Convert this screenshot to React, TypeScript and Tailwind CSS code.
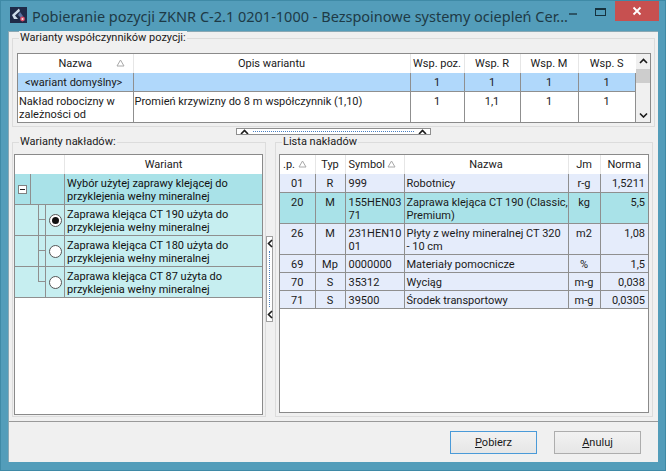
const sans = "font-['Roboto','Noto_Sans','Liberation_Sans',sans-serif]";

function Sort() {
  return (
    <svg width="9" height="8" viewBox="0 0 9 8" className="absolute right-2 top-[5px]">
      <path d="M4.5 1 L8 7 L1 7 Z" fill="#fff" stroke="#a8a8a8" strokeWidth="1" />
    </svg>
  );
}

function Chevron({ dir }: { dir: "up" | "down" | "left" }) {
  const d = dir === "up" ? "M1 5 L4.5 1.5 L8 5" : dir === "down" ? "M1 1.5 L4.5 5 L8 1.5" : "M5 1 L1.5 4.5 L5 8";
  const w = dir === "left" ? 6 : 9;
  const h = dir === "left" ? 9 : 6;
  return (
    <svg width={w} height={h} viewBox={`0 0 ${w} ${h}`} className="shrink-0">
      <path d={d} fill="none" stroke="#1a1a1a" strokeWidth="1.6" />
    </svg>
  );
}

function Radio({ on }: { on?: boolean }) {
  return (
    <span className="w-[13px] h-[13px] rounded-full border border-[#555] bg-white flex items-center justify-center">
      {on && <span className="w-[7px] h-[7px] rounded-full bg-[#111]" />}
    </span>
  );
}

const TH = "relative border-l border-[#e6e6e6] first:border-l-0 font-normal text-center p-0 pt-[1px] h-[19px] bg-white overflow-hidden whitespace-nowrap";
const TD = "border border-[#8f8f8f] px-[3px] pt-[3px] align-top leading-[13px] overflow-hidden";

function TopTable() {
  return (
    <div className="flex border border-[#8a8a8a] h-[70px] bg-white overflow-hidden">
      <table className="table-fixed border-collapse w-[617px] h-[69px] self-start">
        <colgroup>
          <col className="w-[115px]" /><col className="w-[277px]" /><col className="w-[54px]" />
          <col className="w-[56px]" /><col className="w-[58px]" /><col className="w-[57px]" />
        </colgroup>
        <thead>
          <tr>
            <th className={TH}>Nazwa<Sort /></th>
            <th className={TH}>Opis wariantu</th>
            <th className={TH}>Wsp. poz.</th>
            <th className={TH}>Wsp. R</th>
            <th className={TH}>Wsp. M</th>
            <th className={TH}>Wsp. S</th>
          </tr>
        </thead>
        <tbody>
          <tr className="bg-[#b0d8fb] h-[18px]">
            <td className={`${TD} border-l-0 border-t-0 pl-[7px] whitespace-nowrap`}>&lt;wariant domyślny&gt;</td>
            <td className={`${TD} border-t-0`}></td>
            <td className={`${TD} border-t-0 text-center`}>1</td>
            <td className={`${TD} border-t-0 text-center`}>1</td>
            <td className={`${TD} border-t-0 text-center`}>1</td>
            <td className={`${TD} border-t-0 text-center`}>1</td>
          </tr>
          <tr className="h-[32px]">
            <td className={`${TD} border-l-0 border-b-0 pl-[1px]`}>
              <div className="h-[27px] overflow-hidden">Nakład robocizny w zależności od</div>
            </td>
            <td className={`${TD} border-b-0 pl-[1px]`}>Promień krzywizny do 8 m współczynnik (1,10)</td>
            <td className={`${TD} border-b-0 text-center`}>1</td>
            <td className={`${TD} border-b-0 text-center`}>1,1</td>
            <td className={`${TD} border-b-0 text-center`}>1</td>
            <td className={`${TD} border-b-0 text-center`}>1</td>
          </tr>
        </tbody>
      </table>
      <div className="flex-1 flex flex-col items-center justify-between bg-[#f0f0f0] py-[4px]">
        <Chevron dir="up" />
        <div className="w-[15px] h-[14px] bg-[#cdcdcd] mb-auto mt-[5px]" />
        <Chevron dir="down" />
      </div>
    </div>
  );
}

function Tree({ rows }: { rows: string[] }) {
  return (
    <div className="flex-1 border border-[#8a8a8a] bg-white flex flex-col overflow-hidden">
      <div className="flex h-[19px] shrink-0">
        <div className="w-[15px]" />
        <div className="w-[35px] border-r border-[#e6e6e6]" />
        <div className="flex-1 text-center leading-[19px]">Wariant</div>
      </div>
      <div className="flex h-[31px] bg-[#a9e2e8] border-b border-[#8f8f8f]">
        <div className="w-[15px] relative flex items-center justify-center">
          <span className="w-[9px] h-[9px] border border-[#808080] bg-white flex items-center justify-center">
            <span className="w-[5px] h-px bg-[#222]" />
          </span>
        </div>
        <div className="w-[35px] border-l border-r border-[#8f8f8f]" />
        <div className="flex-1 px-[2px] pt-[3px] leading-[13px] text-[#111]">Wybór użytej zaprawy klejącej do przyklejenia wełny mineralnej</div>
      </div>
      {rows.map((r, i) => (
        <div key={r} className="flex h-[31px] bg-[#c6eef0] border-b border-[#8f8f8f]">
          <div className="w-[23px] shrink-0" />
          <div className="w-[7px] shrink-0 relative">
            <div className={`absolute left-0 top-0 w-px bg-[#8f8f8f] ${i === 2 ? "h-[15px]" : "h-[31px]"}`} />
            <div className="absolute left-0 top-[14px] w-[7px] h-px bg-[#8f8f8f]" />
          </div>
          <div className="w-[20px] shrink-0 border-l border-r border-[#8f8f8f] flex items-center justify-center">
            <Radio on={i === 0} />
          </div>
          <div className="flex-1 px-[2px] pt-[3px] leading-[13px] text-[#111]">{r}</div>
        </div>
      ))}
    </div>
  );
}

const costs = [
  ["01", "R", "999", "Robotnicy", "r-g", "1,5211", "bg-[#e5ecfb]", "h-[18px]"],
  ["20", "M", "155HEN0371", "Zaprawa klejąca CT 190 (Classic,\nPremium)", "kg", "5,5", "bg-[#a9e2e8]", "h-[31px]"],
  ["26", "M", "231HEN1001", "Płyty z wełny mineralnej CT 320\n- 10 cm", "m2", "1,08", "bg-[#e5ecfb]", "h-[31px]"],
  ["69", "Mp", "0000000", "Materiały pomocnicze", "%", "1,5", "bg-[#e5ecfb]", "h-[18px]"],
  ["70", "S", "35312", "Wyciąg", "m-g", "0,038", "bg-[#e5ecfb]", "h-[18px]"],
  ["71", "S", "39500", "Środek transportowy", "m-g", "0,0305", "bg-[#e5ecfb]", "h-[18px]"],
];

function CostTable() {
  return (
    <div className="flex-1 border border-[#8a8a8a] bg-white overflow-hidden">
      <table className="table-fixed border-collapse w-[368px]">
        <colgroup>
          <col className="w-[35px]" /><col className="w-[30px]" /><col className="w-[59px]" />
          <col className="w-[164px]" /><col className="w-[32px]" /><col className="w-[48px]" />
        </colgroup>
        <thead>
          <tr>
            <th className={`${TH} h-[18px] text-left pl-[3px]`}>.p.<Sort /></th>
            <th className={`${TH} h-[18px]`}>Typ</th>
            <th className={`${TH} h-[18px] text-left pl-[3px]`}>Symbol<Sort /></th>
            <th className={`${TH} h-[18px]`}>Nazwa</th>
            <th className={`${TH} h-[18px]`}>Jm</th>
            <th className={`${TH} h-[18px]`}>Norma</th>
          </tr>
        </thead>
        <tbody>
          {costs.map((c) => (
            <tr key={c[0]} className={`${c[6]} ${c[7]}`}>
              <td className={`${TD} border-l-0 border-t-0 text-center`}>{c[0]}</td>
              <td className={`${TD} border-t-0 text-center`}>{c[1]}</td>
              <td className={`${TD} border-t-0 px-[2px]`}>
                {c[2].length > 8 ? <>{c[2].slice(0, 8)}<wbr />{c[2].slice(8)}</> : c[2]}
              </td>
              <td className={`${TD} border-t-0 pl-[2px] pr-0 whitespace-pre`}>{c[3]}</td>
              <td className={`${TD} border-t-0 text-center`}>{c[4]}</td>
              <td className={`${TD} border-t-0 border-r-0 text-right`}>{c[5]}</td>
            </tr>
          ))}
        </tbody>
      </table>
    </div>
  );
}

function Group({ title, className, children }: { title: string; className: string; children: React.ReactNode }) {
  return (
    <section className={`relative border border-[#dcdcdc] flex flex-col ${className}`}>
      <span className="absolute -top-[8px] left-[6px] bg-[#f0f0f0] px-[1px] leading-[14px] whitespace-nowrap">{title}</span>
      {children}
    </section>
  );
}

function Button({ label, rest, primary }: { label: string; rest: string; primary?: boolean }) {
  return (
    <button className={`w-[87px] h-[23px] leading-[20px] text-center border bg-gradient-to-b from-[#f2f2f2] to-[#e6e6e6] ${primary ? "border-[#4a9ad8]" : "border-[#adadad]"}`}>
      <span className="underline underline-offset-1">{label}</span>{rest}
    </button>
  );
}

export default function App() {
  return (
    <div className={`${sans} w-[666px] h-[471px] bg-[#539dba] text-[11px] text-[#1a1a1a] flex flex-col overflow-hidden border border-[#3f8aa6]`}>
      <header className="h-[30px] shrink-0 flex items-start pl-[9px] relative">
        <svg width="17" height="16" viewBox="0 0 17 16" className="mt-[6px] shrink-0">
          <rect width="17" height="16" fill="#1f2a48" />
          <path d="M2 8 L9 1.5 L10 4 L5 8.5 L8 12 L4 12 Z" fill="#cfdcea" />
          <path d="M10 5 L13 9 L11 11 L8 8 Z" fill="#5a6f9c" />
          <circle cx="12.5" cy="12" r="2.4" fill="#d8506a" />
          <circle cx="12.5" cy="12" r="1" fill="#f7e4e8" />
        </svg>
        <h1 className="ml-[5px] mt-[3px] text-[14.5px] leading-[24px] font-normal text-[#1e3a46] font-['Noto_Sans',sans-serif] whitespace-nowrap">
          Pobieranie pozycji ZKNR C-2.1 0201-1000 - Bezspoinowe systemy ociepleń Cer...
        </h1>
        <div className="absolute right-[6px] top-0 flex items-start">
          <div className="w-[8px] h-[2px] mt-[12px] mr-[18px] bg-[#2d5566]" />
          <div className="w-[11px] h-[8px] mt-[7px] mr-[9px] border border-[#16323e] border-t-2" />
          <div className="w-[44px] h-[20px] bg-[#c75050] flex items-center justify-center">
            <svg width="10" height="10" viewBox="0 0 10 10"><path d="M1.5 1.5 L8.5 8.5 M8.5 1.5 L1.5 8.5" stroke="#fff" strokeWidth="1.8" /></svg>
          </div>
        </div>
      </header>

      <main className="mx-[7px] w-[650px] h-[431px] bg-[#f0f0f0] border-t border-l border-[#8aa8b4] flex flex-col">
        <div className="px-[3px] pt-[6px]">
          <Group title="Warianty współczynników pozycji:" className="pl-[4px] pr-[3px] pt-[14px] pb-[3px]">
            <TopTable />
          </Group>
        </div>

        <div className="flex justify-center mt-[1px] mb-[7px]">
          <div className="w-[195px] h-[7px] bg-white border border-[#8f8f8f] flex items-center justify-between px-[3px] overflow-hidden">
            <Chevron dir="up" />
            <div className="flex-1 mx-[4px] border-t border-dotted border-[#4a7fc0]" />
            <Chevron dir="up" />
          </div>
        </div>

        <div className="flex-1 flex pl-[3px] min-h-0">
          <Group title="Warianty nakładów:" className="w-[254px] pl-[1px] pr-[2px] pt-[11px] pb-[1px] h-[275px]">
            <Tree rows={["Zaprawa klejąca CT 190 użyta do przyklejenia wełny mineralnej", "Zaprawa klejąca CT 180 użyta do przyklejenia wełny mineralnej", "Zaprawa klejąca CT 87 użyta do przyklejenia wełny mineralnej"]} />
          </Group>

          <div className="w-[7px] self-start mt-[94px] h-[86px] bg-white border border-[#a0a0a0] flex flex-col items-center justify-between py-[2px]">
            <Chevron dir="left" />
            <div className="flex-1 my-[3px] border-l border-dotted border-[#4a7fc0]" />
            <Chevron dir="left" />
          </div>

          <Group title="Lista nakładów" className="w-[378px] ml-[2px] pl-[3px] pr-[3px] pt-[11px] pb-[3px] h-[275px]">
            <CostTable />
          </Group>
        </div>

        <footer className="h-[41px] shrink-0 border-t border-[#9a9a9a] flex justify-end gap-[17px] pr-[17px] pt-[9px]">
          <Button label="P" rest="obierz" primary />
          <Button label="A" rest="nuluj" />
        </footer>
      </main>
    </div>
  );
}
